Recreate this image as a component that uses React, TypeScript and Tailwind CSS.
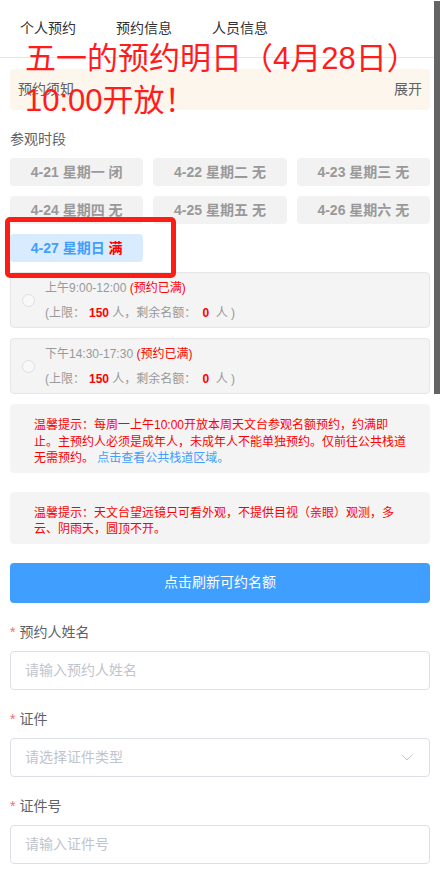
import { useState } from "react";

const days = [
  { date: "4-21", week: "星期一", status: "闭" },
  { date: "4-22", week: "星期二", status: "无" },
  { date: "4-23", week: "星期三", status: "无" },
  { date: "4-24", week: "星期四", status: "无" },
  { date: "4-25", week: "星期五", status: "无" },
  { date: "4-26", week: "星期六", status: "无" },
  { date: "4-27", week: "星期日", status: "满" },
];

const slots = ["上午9:00-12:00", "下午14:30-17:30"];

const FormLabel = ({ text }: { text: string }) => (
  <div className="mt-[19px] h-[20px] leading-[20px] text-[14px] text-[#606266]">
    <span className="text-[#f56c6c] mr-[4px]">*</span>
    {text}
  </div>
);

const App = () => {
  const [activeTab] = useState(0);
  const [selected, setSelected] = useState(6);

  return (
    <div
      className="relative w-[440px] min-h-[869px] bg-white overflow-hidden"
      style={{ fontFamily: '"Liberation Sans", "Noto Sans CJK SC", sans-serif' }}
    >
      <div className="h-[58px] border-b border-[#e4e7ed] flex items-center pl-5 gap-10 text-[14px] text-[#303133]">
        {["个人预约", "预约信息", "人员信息"].map((tab, i) => (
          <div key={tab} className={i === activeTab ? "text-[#303133]" : ""}>
            {tab}
          </div>
        ))}
      </div>

      <div className="px-[10px] pb-6">
        <div className="mt-[11px] h-[41px] rounded bg-[#fdf6ec] flex items-center justify-between px-2 text-[14px] text-[#606266]">
          <span>预约须知</span>
          <span>展开</span>
        </div>

        <div className="mt-[19px] h-[20px] leading-[20px] text-[14px] text-[#606266]">参观时段</div>

        <div className="mt-[9px] grid grid-cols-3 gap-[10px]">
          {days.map((d, i) => {
            const active = i === selected;
            return (
              <button
                key={d.date}
                type="button"
                onClick={() => setSelected(i)}
                className={`h-[28px] rounded text-[14px] font-bold ${
                  active ? "bg-[#d9ecff] text-[#409eff]" : "bg-[#f2f2f2] text-[#999999]"
                }`}
              >
                {d.date} {d.week} <span className={d.status === "满" ? "text-[#ff0000]" : ""}>{d.status}</span>
              </button>
            );
          })}
        </div>

        <div className="mt-[10px] flex flex-col gap-[10px]">
          {slots.map((slot) => (
            <div
              key={slot}
              className="h-[56px] rounded border border-[#e6e6e6] bg-[#f4f4f4] flex items-center pl-[11px] text-[12px] text-[#999999]"
            >
              <span className="w-[13px] h-[13px] rounded-full border border-[#dcdfe6] bg-[#f8f8f8] shrink-0" />
              <div className="ml-[10px] flex flex-col gap-[5px] leading-[20px]">
                <div>
                  {slot} <span className="text-[#ff0000]">(预约已满)</span>
                </div>
                <div>
                  (上限：<b className="ml-[4px] text-[#ff0000]">150</b> 人，剩余名额：
                  <b className="ml-[6px] text-[#ff0000]">0</b>&nbsp; 人 )
                </div>
              </div>
            </div>
          ))}
        </div>

        <div className="mt-[10px] rounded bg-[#f4f4f4] pl-6 pr-[22px] pt-[13px] pb-[6px] text-[12px] leading-[16.5px] text-[#ff0000]">
          温馨提示：每周一上午10:00开放本周天文台参观名额预约，约满即止。主预约人必须是成年人，未成年人不能单独预约。仅前往公共栈道无需预约。
          <span className="text-[#409eff]"> 点击查看公共栈道区域。</span>
        </div>

        <div className="mt-[19px] rounded bg-[#f4f4f4] pl-6 pr-[22px] pt-[13px] pb-[6px] text-[12px] leading-[16.5px] text-[#ff0000]">
          温馨提示：天文台望远镜只可看外观，不提供目视（亲眼）观测，多云、阴雨天，圆顶不开。
        </div>

        <button type="button" className="mt-[19px] w-full h-10 rounded bg-[#409eff] text-white text-[14px]">
          点击刷新可约名额
        </button>

        <FormLabel text="预约人姓名" />
        <input
          className="mt-[9px] w-full h-[39px] rounded border border-[#dcdfe6] px-[14px] text-[14px] outline-none placeholder:text-[#c0c4cc]"
          placeholder="请输入预约人姓名"
        />

        <FormLabel text="证件" />
        <div className="mt-[9px] w-full h-[39px] rounded border border-[#dcdfe6] pl-[14px] pr-[16px] flex items-center justify-between text-[14px] text-[#c0c4cc]">
          <span>请选择证件类型</span>
          <svg width="12" height="7" viewBox="0 0 12 7" fill="none">
            <polyline points="0.5,0.5 6,6 11.5,0.5" stroke="#c0c4cc" strokeWidth="1" />
          </svg>
        </div>

        <FormLabel text="证件号" />
        <input
          className="mt-[9px] w-full h-[39px] rounded border border-[#dcdfe6] px-[14px] text-[14px] outline-none placeholder:text-[#c0c4cc]"
          placeholder="请输入证件号"
        />
      </div>

      {/* annotation overlay */}
      <div className="absolute left-[25px] top-[38px] text-[31px] leading-[42px] text-[#fe1c1c] whitespace-nowrap">
        <div>五一的预约明日（4月28日）</div>
        <div>10:00开放！</div>
      </div>
      <div className="absolute left-[5px] top-[217px] w-[171px] h-[61px] border-[5px] border-[#fe1c14] rounded-[5px]" />

      <div className="absolute right-0 top-[1px] w-[6px] h-[393px] bg-[#646464]" />
    </div>
  );
};

export default App;
